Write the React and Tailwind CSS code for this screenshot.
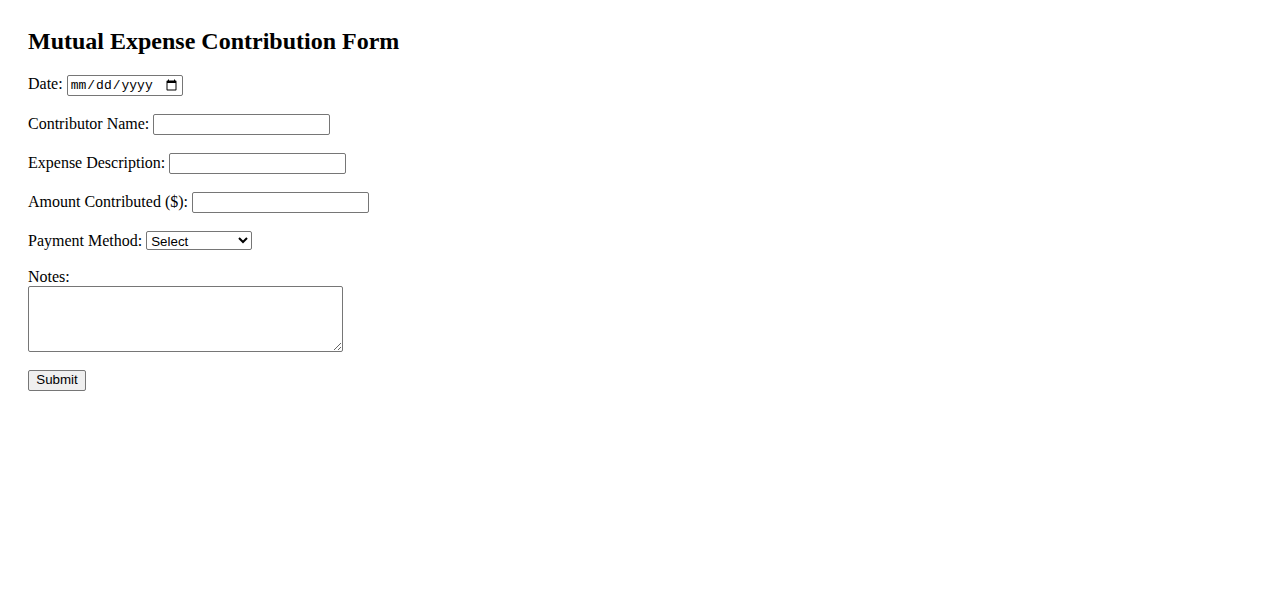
export default function App() {
  const inputCls =
    "align-baseline border border-[#767676] rounded-[2px] bg-white px-[2px] py-[1px] text-[13.333px] [font-family:Arial,'Liberation_Sans',sans-serif] text-black";
  return (
    <div className="min-h-[601px] bg-white text-black text-[16px] [font-family:'Liberation_Serif','Times_New_Roman',serif] px-[28px] pt-[28px]">
      <h2 className="text-[24px] font-bold leading-[27.6px] mb-[19px]">
        Mutual Expense Contribution Form
      </h2>
      <form onSubmit={(e) => e.preventDefault()}>
        <div className="mb-[16px] leading-[normal]">
          <label>Date:</label>{" "}
          <input
            type="date"
            className="align-baseline border border-[#767676] rounded-[2px] bg-white px-[2px] py-[1px] text-[13px] [font-family:'Liberation_Mono','Courier_New',monospace] text-black w-[116px] h-[21px]"
          />
        </div>
        <div className="mb-[15px]">
          <label>Contributor Name:</label>{" "}
          <input type="text" className={inputCls + " w-[177px] h-[21px]"} />
        </div>
        <div className="mb-[15px]">
          <label>Expense Description:</label>{" "}
          <input type="text" className={inputCls + " w-[177px] h-[21px]"} />
        </div>
        <div className="mb-[15px]">
          <label>Amount Contributed ($):</label>{" "}
          <input type="number" className={inputCls + " w-[177px] h-[21px]"} />
        </div>
        <div className="mb-[15px]">
          <label>Payment Method:</label>{" "}
          <select className={inputCls + " w-[106px] h-[19px] pl-0 pr-0 py-0"} defaultValue="">
            <option value="">Select</option>
            <option>Cash</option>
            <option>Credit Card</option>
            <option>Bank Transfer</option>
          </select>
        </div>
        <div className="mb-[18px] leading-[normal]">
          <label className="block">Notes:</label>
          <textarea className={inputCls + " w-[315px] h-[66px] block resize"} />
        </div>
        <button
          type="submit"
          className="block border border-[#767676] rounded-[2px] bg-[#efefef] px-[6px] py-[1px] h-[21px] w-[58px] text-[13.333px] [font-family:Arial,'Liberation_Sans',sans-serif] text-black leading-none"
        >
          Submit
        </button>
      </form>
    </div>
  );
}
